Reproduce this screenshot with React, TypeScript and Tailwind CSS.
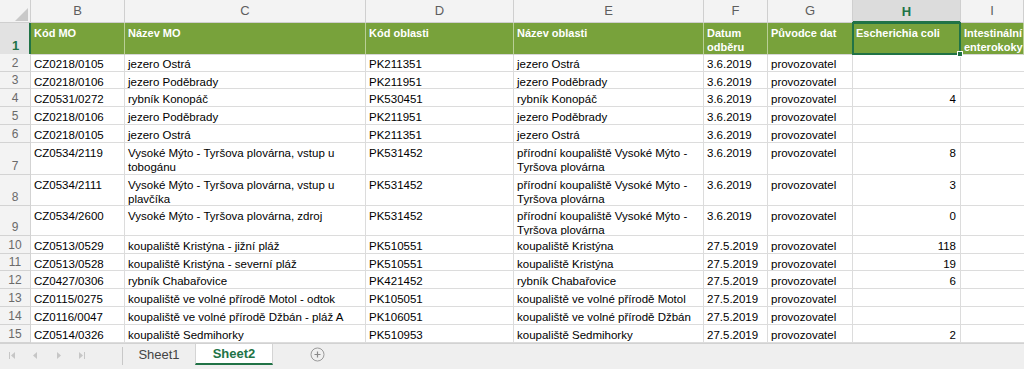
import React from "react";

// Column template shared by every row: row-number gutter + columns B..I
const GRID = "grid grid-cols-[31px_94px_241px_148px_190px_64px_85px_108px_63px]";

const LETTERS = ["B", "C", "D", "E", "F", "G", "H", "I"];

const HEADERS = [
  "Kód MO",
  "Název MO",
  "Kód oblasti",
  "Název oblasti",
  "Datum\nodběru",
  "Původce dat",
  "Escherichia coli",
  "Intestinální\nenterokoky",
];

type Row = { h: string; cells: string[] };

const VM = "přírodní koupaliště Vysoké Mýto -\nTyršova plovárna";

const ROWS: Row[] = [
  { h: "h-[18px]", cells: ["CZ0218/0105", "jezero Ostrá", "PK211351", "jezero Ostrá", "3.6.2019", "provozovatel", ""] },
  { h: "h-[17px]", cells: ["CZ0218/0106", "jezero Poděbrady", "PK211951", "jezero Poděbrady", "3.6.2019", "provozovatel", ""] },
  { h: "h-[18px]", cells: ["CZ0531/0272", "rybník Konopáč", "PK530451", "rybník Konopáč", "3.6.2019", "provozovatel", "4"] },
  { h: "h-[18px]", cells: ["CZ0218/0106", "jezero Poděbrady", "PK211951", "jezero Poděbrady", "3.6.2019", "provozovatel", ""] },
  { h: "h-[18px]", cells: ["CZ0218/0105", "jezero Ostrá", "PK211351", "jezero Ostrá", "3.6.2019", "provozovatel", ""] },
  { h: "h-[32px]", cells: ["CZ0534/2119", "Vysoké Mýto - Tyršova plovárna, vstup u\ntobogánu", "PK531452", VM, "3.6.2019", "provozovatel", "8"] },
  { h: "h-[31px]", cells: ["CZ0534/2111", "Vysoké Mýto - Tyršova plovárna, vstup u\nplavčíka", "PK531452", VM, "3.6.2019", "provozovatel", "3"] },
  { h: "h-[30px]", cells: ["CZ0534/2600", "Vysoké Mýto - Tyršova plovárna, zdroj", "PK531452", VM, "3.6.2019", "provozovatel", "0"] },
  { h: "h-[18px]", cells: ["CZ0513/0529", "koupaliště Kristýna - jižní pláž", "PK510551", "koupaliště Kristýna", "27.5.2019", "provozovatel", "118"] },
  { h: "h-[17px]", cells: ["CZ0513/0528", "koupaliště Kristýna - severní pláž", "PK510551", "koupaliště Kristýna", "27.5.2019", "provozovatel", "19"] },
  { h: "h-[18px]", cells: ["CZ0427/0306", "rybník Chabařovice", "PK421452", "rybník Chabařovice", "27.5.2019", "provozovatel", "6"] },
  { h: "h-[18px]", cells: ["CZ0115/0275", "koupaliště ve volné přírodě Motol - odtok", "PK105051", "koupaliště ve volné přírodě Motol", "27.5.2019", "provozovatel", ""] },
  { h: "h-[18px]", cells: ["CZ0116/0047", "koupaliště ve volné přírodě Džbán - pláž A", "PK106051", "koupaliště ve volné přírodě Džbán", "27.5.2019", "provozovatel", ""] },
  { h: "h-[18px]", cells: ["CZ0514/0326", "koupaliště Sedmihorky", "PK510953", "koupaliště Sedmihorky", "27.5.2019", "provozovatel", "2"] },
];

function NavIcon({ kind }: { kind: "first" | "prev" | "next" | "last" }) {
  const left = kind === "first" || kind === "prev";
  const bar = kind === "first" || kind === "last";
  return (
    <svg width="8" height="9" viewBox="0 0 8 9" className="text-[#c6c6c6]">
      {left ? (
        <path d={bar ? "M7 1 L3 4.5 L7 8 Z" : "M6 1 L2 4.5 L6 8 Z"} fill="currentColor" />
      ) : (
        <path d={bar ? "M1 1 L5 4.5 L1 8 Z" : "M2 1 L6 4.5 L2 8 Z"} fill="currentColor" />
      )}
      {bar && <rect x={left ? 1 : 6} y="1" width="1" height="7" fill="currentColor" />}
    </svg>
  );
}

export default function App() {
  return (
    <div className="w-[1024px] h-[369px] overflow-hidden bg-white flex flex-col font-['Liberation_Sans',Arial,sans-serif]">
      {/* column letters */}
      <div className={`${GRID} h-[23px] bg-[#f3f3f3]`}>
        <div className="border-r border-b border-[#cfcfcf] flex items-end justify-end pr-[2px] pb-[1px]">
          <svg width="13" height="13" viewBox="0 0 13 13">
            <path d="M13 0 L13 13 L0 13 Z" fill="#c9c9c9" />
          </svg>
        </div>
        {LETTERS.map((l) =>
          l === "H" ? (
            <div
              key={l}
              className="border-r border-[#cfcfcf] bg-[#dcdcdc] shadow-[inset_0_-2px_0_#217346] flex items-center justify-center text-[13px] font-bold text-[#217346]"
            >
              {l}
            </div>
          ) : (
            <div
              key={l}
              className="border-r border-b border-[#cfcfcf] flex items-center justify-center text-[13px] text-[#5e5e5e]"
            >
              {l}
            </div>
          )
        )}
      </div>

      {/* header row 1 */}
      <div className={`${GRID} h-[31px]`}>
        <div className="bg-[#e2e2e2] border-b border-[#d0d0d0] shadow-[inset_-2px_0_0_#217346] flex items-end justify-center pb-[1px] text-[13px] leading-[14px] font-bold text-[#217346]">
          1
        </div>
        {HEADERS.map((t, i) => (
          <div
            key={i}
            className={`relative bg-[#78a23b] border-r border-b border-r-[#b9cf96] border-b-[#d6d6d6] pl-[3px] pt-[3px] text-[11px] leading-[14px] font-bold text-white whitespace-pre ${i === 7 ? "overflow-hidden" : ""}`}
          >
            {t}
            {i === 6 && (
              <div className="absolute -left-[1px] -top-[1px] -right-[1px] -bottom-[1px] border-2 border-[#217346] z-10">
                <div className="absolute -right-[4px] -bottom-[4px] w-[6px] h-[6px] bg-[#217346] border border-white" />
              </div>
            )}
          </div>
        ))}
      </div>

      {/* data rows */}
      {ROWS.map((r, ri) => (
        <div key={ri} className={`${GRID} ${r.h}`}>
          <div className="bg-[#f3f3f3] border-r border-b border-[#d3d3d3] flex items-end justify-center pb-[1px] text-[12px] leading-[14px] text-[#6a6a6a]">
            {ri + 2}
          </div>
          {r.cells.map((c, ci) => (
            <div
              key={ci}
              className={`border-r border-b border-[#dcdcdc] pt-[3px] text-[11.5px] leading-[14px] text-black whitespace-pre overflow-hidden ${ci === 6 ? "text-right pr-[4px]" : "pl-[3px]"}`}
            >
              {c}
            </div>
          ))}
          <div className="border-b border-[#dcdcdc]" />
        </div>
      ))}

      {/* sheet tabs */}
      <div className="flex-1 flex items-start bg-[#efefef] border-t border-[#d2d2d2] text-[13px]">
        <div className="w-[122px] h-full flex items-center pb-[2px]">
          <div className="w-[23.5px] flex justify-center"><NavIcon kind="first" /></div>
          <div className="w-[23.5px] flex justify-center"><NavIcon kind="prev" /></div>
          <div className="w-[23.5px] flex justify-center"><NavIcon kind="next" /></div>
          <div className="w-[23.5px] flex justify-center"><NavIcon kind="last" /></div>
        </div>
        <div className="w-px h-[18px] mt-[3px] bg-[#c8c8c8]" />
        <div className="w-[72px] h-[21px] flex items-center justify-center text-[#444]">Sheet1</div>
        <div className="w-[78px] h-[21px] flex items-center justify-center bg-white border-x border-[#d4d4d4] border-b-2 border-b-[#217346] font-bold text-[#217346]">
          Sheet2
        </div>
        <div className="ml-[37px] mt-[3px]">
          <svg width="15" height="15" viewBox="0 0 15 15">
            <circle cx="7.5" cy="7.5" r="6.5" fill="none" stroke="#9a9a9a" strokeWidth="1" />
            <path d="M7.5 4.5 V10.5 M4.5 7.5 H10.5" stroke="#8a8a8a" strokeWidth="1.2" />
          </svg>
        </div>
      </div>
    </div>
  );
}
